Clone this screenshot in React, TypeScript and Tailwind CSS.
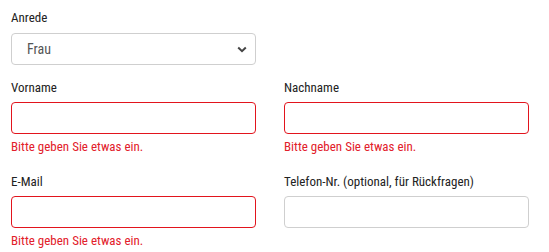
import React from "react";

function Label({ children }: { children: React.ReactNode }) {
  return <div className="text-[13px] leading-5 text-[#222] font-stretch-[75%]">{children}</div>;
}

function Input({ error }: { error?: boolean }) {
  return (
    <div
      className={
        "h-8 w-full rounded-[4px] border bg-white " +
        (error ? "border-[#e2141d]" : "border-[#cfcfcf]")
      }
    />
  );
}

function Err() {
  return <div className="mt-[3px] text-[13px] leading-5 text-[#e2202a] font-stretch-[75%]">Bitte geben Sie etwas ein.</div>;
}

export default function App() {
  return (
    <div className="h-[252px] w-[549px] bg-white pl-[11px] pt-2" style={{ fontFamily: "Roboto, sans-serif" }}>
      <div className="w-[245px]">
        <Label>Anrede</Label>
        <div className="mt-[5px] flex h-8 items-center justify-between rounded-[4px] border border-[#cfcfcf] pl-[15px] pr-[8px]">
          <span className="text-[14px] text-[#555] font-stretch-[75%]">Frau</span>
          <svg width="10" height="7" viewBox="0 0 10 7" className="mt-[1px]">
            <path d="M1.2 1.5 L5 5.2 L8.8 1.5" fill="none" stroke="#444" strokeWidth="2" />
          </svg>
        </div>
      </div>
      <div className="mt-[13px] grid grid-cols-[245px_245px] gap-x-[28px]">
        <div>
          <Label>Vorname</Label>
          <div className="mt-1"><Input error /></div>
          <Err />
        </div>
        <div>
          <Label>Nachname</Label>
          <div className="mt-1"><Input error /></div>
          <Err />
        </div>
      </div>
      <div className="mt-[15px] grid grid-cols-[245px_245px] gap-x-[28px]">
        <div>
          <Label>E-Mail</Label>
          <div className="mt-1"><Input error /></div>
          <Err />
        </div>
        <div>
          <Label>Telefon-Nr. (optional, für Rückfragen)</Label>
          <div className="mt-1"><Input /></div>
        </div>
      </div>
    </div>
  );
}
